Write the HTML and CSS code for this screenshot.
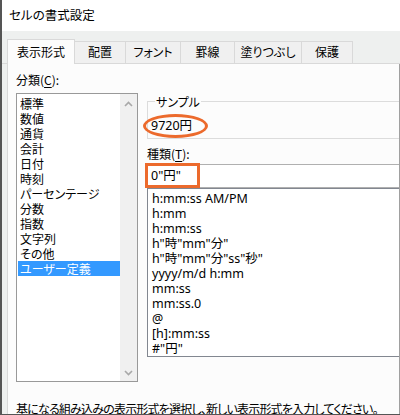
FILE: index.html
```html
<!DOCTYPE html>
<html lang="ja">
<head>
<meta charset="utf-8">
<link rel="stylesheet" href="styles.css">
</head>
<body>
<div class="window">
  <div class="titlebar">セルの書式設定</div>
  <div class="tabbar">
    <div class="tab selected">表示形式</div>
    <div class="tab w51">配置</div>
    <div class="tab w55">フォント</div>
    <div class="tab w54">罫線</div>
    <div class="tab w67">塗りつぶし</div>
    <div class="tab w51">保護</div>
  </div>
  <div class="panel">
    <div class="row">
      <div class="leftcol">
        <div class="label">分類(<u>C</u>):</div>
        <div class="catlist">
          <div class="items">
            <div class="item">標準</div>
            <div class="item">数値</div>
            <div class="item">通貨</div>
            <div class="item">会計</div>
            <div class="item">日付</div>
            <div class="item">時刻</div>
            <div class="item">パーセンテージ</div>
            <div class="item">分数</div>
            <div class="item">指数</div>
            <div class="item">文字列</div>
            <div class="item">その他</div>
            <div class="item sel">ユーザー定義</div>
          </div>
          <div class="scrollbar">
            <svg class="arrow" width="17" height="12" viewBox="0 0 17 12"><path d="M5 8 L8.5 4.5 L12 8" fill="none" stroke="#a8a8a8" stroke-width="1.6"/></svg>
            <svg class="arrow" width="17" height="12" viewBox="0 0 17 12"><path d="M5 4 L8.5 7.5 L12 4" fill="none" stroke="#a8a8a8" stroke-width="1.6"/></svg>
          </div>
        </div>
      </div>
      <div class="rightcol">
        <fieldset class="group">
          <legend class="legend">サンプル</legend>
          <span class="sample">9720円<span class="ellipse"></span></span>
        </fieldset>
        <div class="label typelabel">種類(<u>T</u>):</div>
        <div class="textbox">0"円"<span class="hilite"></span></div>
        <div class="fmtlist">
          <div class="fitem">h:mm:ss AM/PM</div>
          <div class="fitem">h:mm</div>
          <div class="fitem">h:mm:ss</div>
          <div class="fitem">h"時"mm"分"</div>
          <div class="fitem">h"時"mm"分"ss"秒"</div>
          <div class="fitem">yyyy/m/d h:mm</div>
          <div class="fitem">mm:ss</div>
          <div class="fitem">mm:ss.0</div>
          <div class="fitem">@</div>
          <div class="fitem">[h]:mm:ss</div>
          <div class="fitem">#"円"</div>
        </div>
      </div>
    </div>
    <div class="hint">基になる組み込みの表示形式を選択し、新しい表示形式を入力してください。</div>
  </div>
</div>
</body>
</html>
```

FILE: styles.css
```css
* { box-sizing: border-box; }
html, body { margin: 0; padding: 0; }
body {
  width: 400px;
  height: 415px;
  overflow: hidden;
  font-family: "Noto Sans CJK JP", sans-serif;
  font-feature-settings: "palt" 1;
  font-size: 12px;
  color: #000;
  background: #fff;
}
.window {
  width: 400px;
  height: 415px;
  border-left: 2px solid #555;
  border-bottom: 1px solid #555;
  background: #eef0ef;
  overflow: hidden;
  display: flex;
  flex-direction: column;
}
.titlebar {
  height: 31px;
  flex: none;
  background: #fff;
  padding-left: 7px;
  line-height: 30px;
  font-size: 12.5px;
}
.tabbar {
  height: 33px;
  flex: none;
  display: flex;
  align-items: flex-end;
  padding-left: 5px;
  border-bottom: 1px solid #d9d9d9;
}
.tab {
  height: 22px;
  background: #f0f0f0;
  border-top: 1px solid #d9d9d9;
  border-right: 1px solid #d9d9d9;
  text-align: center;
  line-height: 20px;
  font-size: 12px;
}
.tab.selected {
  width: 68px;
  height: 25px;
  margin-bottom: -1px;
  background: #fcfcfc;
  border-left: 1px solid #d9d9d9;
  line-height: 24px;
  position: relative;
}
.w51 { width: 51px; }
.w55 { width: 55px; }
.w54 { width: 54px; }
.w67 { width: 67px; }
.panel {
  flex: 1;
  margin-left: 5px;
  background: #fcfcfc;
  border-left: 1px solid #d9d9d9;
  border-right: 1px solid #a0a0a0;
  padding: 8px 0 0 8px;
  overflow: hidden;
}
.row {
  display: flex;
  gap: 9px;
}
.leftcol {
  width: 122px;
  flex: none;
}
.label {
  line-height: 15px;
  height: 15px;
  white-space: nowrap;
}
.label u { text-underline-offset: 2px; }
.catlist {
  margin-top: 6px;
  height: 289px;
  border: 1px solid #999;
  background: #fff;
  display: flex;
}
.items {
  flex: 1;
  padding: 2px 0 0 1px;
}
.item {
  line-height: 15px;
  height: 15px;
  padding-left: 2px;
  white-space: nowrap;
}
.item.sel {
  background: #3399ff;
  color: #fff;
}
.scrollbar {
  width: 17px;
  flex: none;
  background: #f0f0f0;
  display: flex;
  flex-direction: column;
  justify-content: space-between;
  padding: 4px 0 2px;
}
.arrow { display: block; }
.rightcol {
  width: 262px;
  flex: none;
}
.group {
  margin: 22px 0 0 0;
  padding: 7px 0 5px 3px;
  border: 1px solid #dcdcdc;
  min-width: 0;
}
.legend {
  padding: 0 1px;
  margin-left: 4px;
  line-height: 15px;
  font-size: 12px;
}
.sample {
  position: relative;
  display: inline-block;
  line-height: 15px;
  font-family: "Noto Sans", "Noto Sans CJK JP", sans-serif;
  font-size: 12.5px;
}
.ellipse {
  position: absolute;
  left: -8px;
  top: -4px;
  width: 65px;
  height: 24px;
  border: 3px solid #ec6a2c;
  border-radius: 50%;
}
.typelabel {
  margin-top: 7px;
}
.textbox {
  position: relative;
  margin-top: 3px;
  height: 24px;
  border: 1px solid #b0b0b0;
  background: #fff;
  padding-left: 3px;
  line-height: 22px;
  font-family: "Noto Sans", "Noto Sans CJK JP", sans-serif;
  font-size: 12.5px;
}
.hilite {
  position: absolute;
  left: -3px;
  top: -2px;
  width: 55px;
  height: 25px;
  border: 3px solid #ec6a2c;
}
.fmtlist {
  height: 169px;
  border: 1px solid #828790;
  background: #fff;
  padding: 2px 0 0 4px;
  font-family: "Noto Sans", "Noto Sans CJK JP", sans-serif;
  font-size: 12.5px;
}
.fitem {
  line-height: 15px;
  height: 15px;
  white-space: nowrap;
}
.hint {
  margin-top: 19px;
  line-height: 15px;
  white-space: nowrap;
  letter-spacing: -0.8px;
}
```
